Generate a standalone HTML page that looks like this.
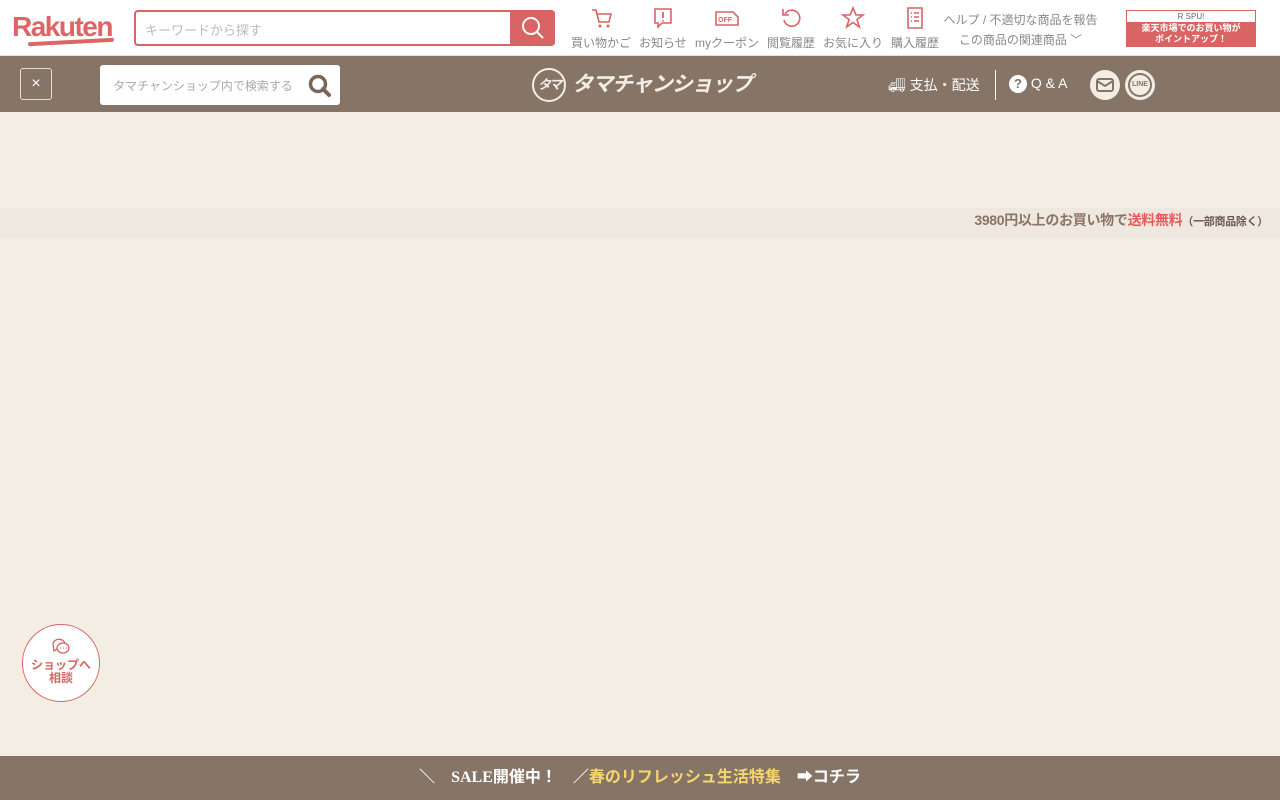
<!DOCTYPE html>
<html><head><meta charset="utf-8"><style>
*{margin:0;padding:0;box-sizing:border-box}
body{width:1280px;height:800px;overflow:hidden;background:#f4ede4;font-family:"Liberation Sans","Noto Sans CJK JP",sans-serif;position:relative}
.top{position:absolute;left:0;top:0;width:1280px;height:56px;background:#fff;border-bottom:1px solid #e0e0e0}
.logo{position:absolute;left:12px;top:11px;color:#dd6565;font-size:28px;font-weight:bold;letter-spacing:-1.5px}
.sbox{position:absolute;left:134px;top:10px;width:421px;height:36px;border:2px solid #d96464;border-radius:4px;background:#fff}
.sbox span{position:absolute;left:9px;top:8px;font-size:13px;color:#bbb}
.sbtn{position:absolute;right:-2px;top:-2px;width:45px;height:36px;background:#d96464;border-radius:0 4px 4px 0}
.nav{position:absolute;top:6px;text-align:center;font-size:12px;color:#888}
.nav svg{display:block;margin:0 auto 4px}
.help{position:absolute;left:943px;top:10px;font-size:12px;color:#888;line-height:20px;text-align:center;width:155px}
.spu{position:absolute;left:1126px;top:10px;width:130px;height:37px;border:1px solid #d96464}
.spu .a{height:11px;font-size:8px;text-align:center;color:#666;line-height:11px}
.spu .b{height:24px;background:#d96464;color:#fff;font-size:9px;font-weight:bold;text-align:center;line-height:11px;padding-top:1px}
.bar{position:absolute;left:0;top:56px;width:1280px;height:56px;background:#867467}
.x{position:absolute;left:20px;top:12px;width:32px;height:32px;border:1px solid #e8ddd0;border-radius:3px;color:#fff;text-align:center;line-height:30px;font-size:16px}
.ssh{position:absolute;left:100px;top:9px;width:240px;height:40px;background:#fff;border-radius:3px}
.ssh span{position:absolute;left:13px;top:12px;font-size:12px;color:#aaa}
.shop{position:absolute;left:532px;top:12px;color:#f4ede4;font-size:21px;font-weight:bold;font-style:italic;letter-spacing:-1px}
.ship{position:absolute;left:888px;top:19px;color:#fff;font-size:14px}
.qa{position:absolute;left:1009px;top:19px;color:#fff;font-size:14px}
.free{position:absolute;left:0;top:208px;width:1280px;height:30px;background:#efe8e0;text-align:right;padding-right:12px;line-height:24px;font-size:14px;color:#8a7566;font-weight:bold;letter-spacing:-0.3px}
.chat{position:absolute;left:22px;top:624px;width:78px;height:78px;border:1px solid #d96464;border-radius:50%;background:#fff;text-align:center;color:#d96464;font-size:12px;font-weight:bold;line-height:13px;padding-top:11px}
.foot{position:absolute;left:0;top:756px;width:1280px;height:44px;background:#867467;color:#fff;font-size:16px;font-weight:bold;line-height:44px;text-align:center;font-family:"Liberation Serif","Noto Sans CJK JP",serif}
</style></head><body>
<div class="top">
<div class="logo">Rakuten<div style="position:absolute;left:16px;top:29px;width:86px;height:4px;background:#dd6565;transform:skewY(-3deg);border-radius:2px"></div></div>
<div class="sbox"><span>キーワードから探す</span><div class="sbtn"><svg width="45" height="36"><circle cx="21" cy="16" r="8" fill="none" stroke="#fff" stroke-width="2"/><path d="M27 22l6 6" stroke="#fff" stroke-width="2"/></svg></div></div>
<div class="nav" style="left:571px"><svg width="24" height="24"><path d="M3 4h4l3 12h10l2-8H8" fill="none" stroke="#d96464" stroke-width="1.6"/><circle cx="11" cy="20" r="1.5" fill="#d96464"/><circle cx="19" cy="20" r="1.5" fill="#d96464"/></svg>買い物かご</div>
<div class="nav" style="left:639px"><svg width="24" height="24"><path d="M4 3h16v14H11l-4 4v-4H4z" fill="none" stroke="#d96464" stroke-width="1.6"/><path d="M12 6v6M12 14v1.5" stroke="#d96464" stroke-width="1.8"/></svg>お知らせ</div>
<div class="nav" style="left:695px"><svg width="26" height="24"><path d="M2 6h17l5 5v8H2z" fill="none" stroke="#d96464" stroke-width="1.6"/><text x="4" y="16" font-size="7" fill="#d96464" font-weight="bold">OFF</text></svg>myクーポン</div>
<div class="nav" style="left:767px"><svg width="24" height="24"><path d="M6 8a8 8 0 1 1-1 6" fill="none" stroke="#d96464" stroke-width="1.6"/><path d="M4 3v6h6" fill="none" stroke="#d96464" stroke-width="1.6"/></svg>閲覧履歴</div>
<div class="nav" style="left:823px"><svg width="24" height="24"><path d="M12 2l3 7h7l-6 4.5 2.3 7.5L12 16.5 5.7 21 8 13.5 2 9h7z" fill="none" stroke="#d96464" stroke-width="1.6"/></svg>お気に入り</div>
<div class="nav" style="left:891px"><svg width="24" height="24"><path d="M5 2h14v20H5z" fill="none" stroke="#d96464" stroke-width="1.6"/><path d="M8 7h1M11 7h5M8 11h1M11 11h5M8 15h1M11 15h5" stroke="#d96464" stroke-width="1.6"/></svg>購入履歴</div>
<div class="help">ヘルプ / 不適切な商品を報告<br>この商品の関連商品 ﹀</div>
<div class="spu"><div class="a">R SPU!</div><div class="b">楽天市場でのお買い物が<br>ポイントアップ！</div></div>
</div>
<div class="bar">
<div class="x">×</div>
<div class="ssh"><span>タマチャンショップ内で検索する</span><svg style="position:absolute;left:206px;top:7px" width="28" height="28"><circle cx="12" cy="12" r="7.5" fill="none" stroke="#7a6658" stroke-width="3.5"/><path d="M17 17l6 6" stroke="#7a6658" stroke-width="4" stroke-linecap="round"/></svg></div>
<div class="shop"><span style="display:inline-block;width:34px;height:34px;border:2px solid #f4ede4;border-radius:50%;font-size:13px;text-align:center;line-height:30px;vertical-align:middle;margin-right:6px;letter-spacing:-2px">タマ</span>タマチャンショップ</div>
<div class="ship">🚚︎ 支払・配送</div>
<div style="position:absolute;left:995px;top:14px;width:1px;height:30px;background:#fff"></div>
<div class="qa"><span style="display:inline-block;width:18px;height:18px;border-radius:50%;background:#fff;color:#867467;text-align:center;line-height:18px;font-weight:bold;font-size:13px">?</span> Q &amp; A</div>
<div style="position:absolute;left:1090px;top:14px;width:30px;height:30px;border-radius:50%;background:#f4ede4"><svg width="30" height="30"><rect x="7" y="9" width="16" height="12" rx="2" fill="none" stroke="#867467" stroke-width="2"/><path d="M7 11l8 5 8-5" fill="none" stroke="#867467" stroke-width="2"/></svg></div>
<div style="position:absolute;left:1125px;top:14px;width:30px;height:30px;border-radius:50%;background:#f4ede4"><div style="position:absolute;left:3px;top:3px;width:24px;height:24px;border:2px solid #867467;border-radius:50%;font-size:7px;font-weight:bold;color:#867467;text-align:center;line-height:20px">LINE</div></div>
</div>
<div class="free">3980円以上のお買い物で<span style="color:#e85a5a">送料無料</span><span style="font-size:11px;color:#6b5a4e">（一部商品除く）</span></div>
<div class="chat"><svg width="22" height="20"><path d="M3 8a6 5 0 1 1 4 5l-3 2z" fill="none" stroke="#d96464" stroke-width="1.3"/><ellipse cx="13" cy="12" rx="6" ry="5" fill="#fff" stroke="#d96464" stroke-width="1.3"/><path d="M10 12h1M13 12h1M16 12h1" stroke="#d96464"/></svg><br>ショップへ<br>相談</div>
<div class="foot">＼　SALE開催中！　／<span style="color:#f5d76e">春のリフレッシュ生活特集</span>　➡コチラ</div>
</body></html>
